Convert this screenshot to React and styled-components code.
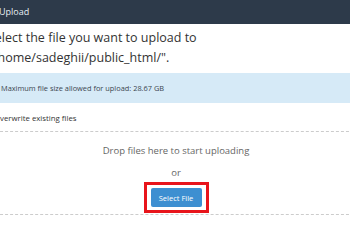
import styled, { createGlobalStyle } from "styled-components";

const GlobalStyle = createGlobalStyle`
  html, body {
    margin: 0;
    padding: 0;
    background: #fff;
    overflow: hidden;
  }
  body {
    font-family: "Open Sans", "Liberation Sans", sans-serif;
    color: #333;
  }
`;

const Page = styled.div`
  width: 380px;
  margin-left: -16px;
`;

const Header = styled.div`
  height: 24px;
  background: #2d3a4a;
  color: #e8edf2;
  font-size: 9px;
  line-height: 24px;
  padding-left: 15px;
`;

const Title = styled.h2`
  margin: 0 0 0 4px;
  padding-top: 4px;
  font-size: 12.5px;
  font-weight: 400;
  line-height: 20px;
  color: #333;
`;

const InfoBox = styled.div`
  margin-top: 5px;
  height: 30px;
  background: #d6eaf7;
  color: #3c4650;
  font-size: 7.4px;
  line-height: 30px;
  padding-left: 17px;
`;

const CheckRow = styled.label`
  display: block;
  height: 26px;
  padding-top: 2px;
  line-height: 26px;
  font-size: 7.8px;
  color: #333;
  margin-left: 10px;
`;

const DropZone = styled.div`
  border: 1px dashed #cccccc;
  margin-left: -4px;
  height: 82px;
  display: flex;
  flex-direction: column;
  align-items: center;
  padding-left: 8px;
`;

const Hint = styled.div`
  font-size: 9.5px;
  color: #666;
  line-height: 14px;
  margin-top: ${(p) => p.$gap}px;
`;

const Highlight = styled.div`
  margin-top: 2px;
  border: 3px solid #e8141b;
  padding: 3px 4px;
`;

const Button = styled.button`
  display: block;
  background: #3d8fd1;
  color: #fff;
  border: none;
  border-radius: 2px;
  font-family: "Open Sans", "Liberation Sans", sans-serif;
  font-size: 7.5px;
  height: 19px;
  width: 51px;
  padding: 0;
  cursor: pointer;
`;

export default function App() {
  return (
    <Page>
      <GlobalStyle />
      <Header>Upload</Header>
      <Title>
        Select the file you want to upload to
        <br />
        "/home/sadeghii/public_html/".
      </Title>
      <InfoBox>Maximum file size allowed for upload: 28.67 GB</InfoBox>
      <CheckRow>Overwrite existing files</CheckRow>
      <DropZone>
        <Hint $gap={12}>Drop files here to start uploading</Hint>
        <Hint $gap={8}>or</Hint>
        <Highlight>
          <Button>Select File</Button>
        </Highlight>
      </DropZone>
    </Page>
  );
}
